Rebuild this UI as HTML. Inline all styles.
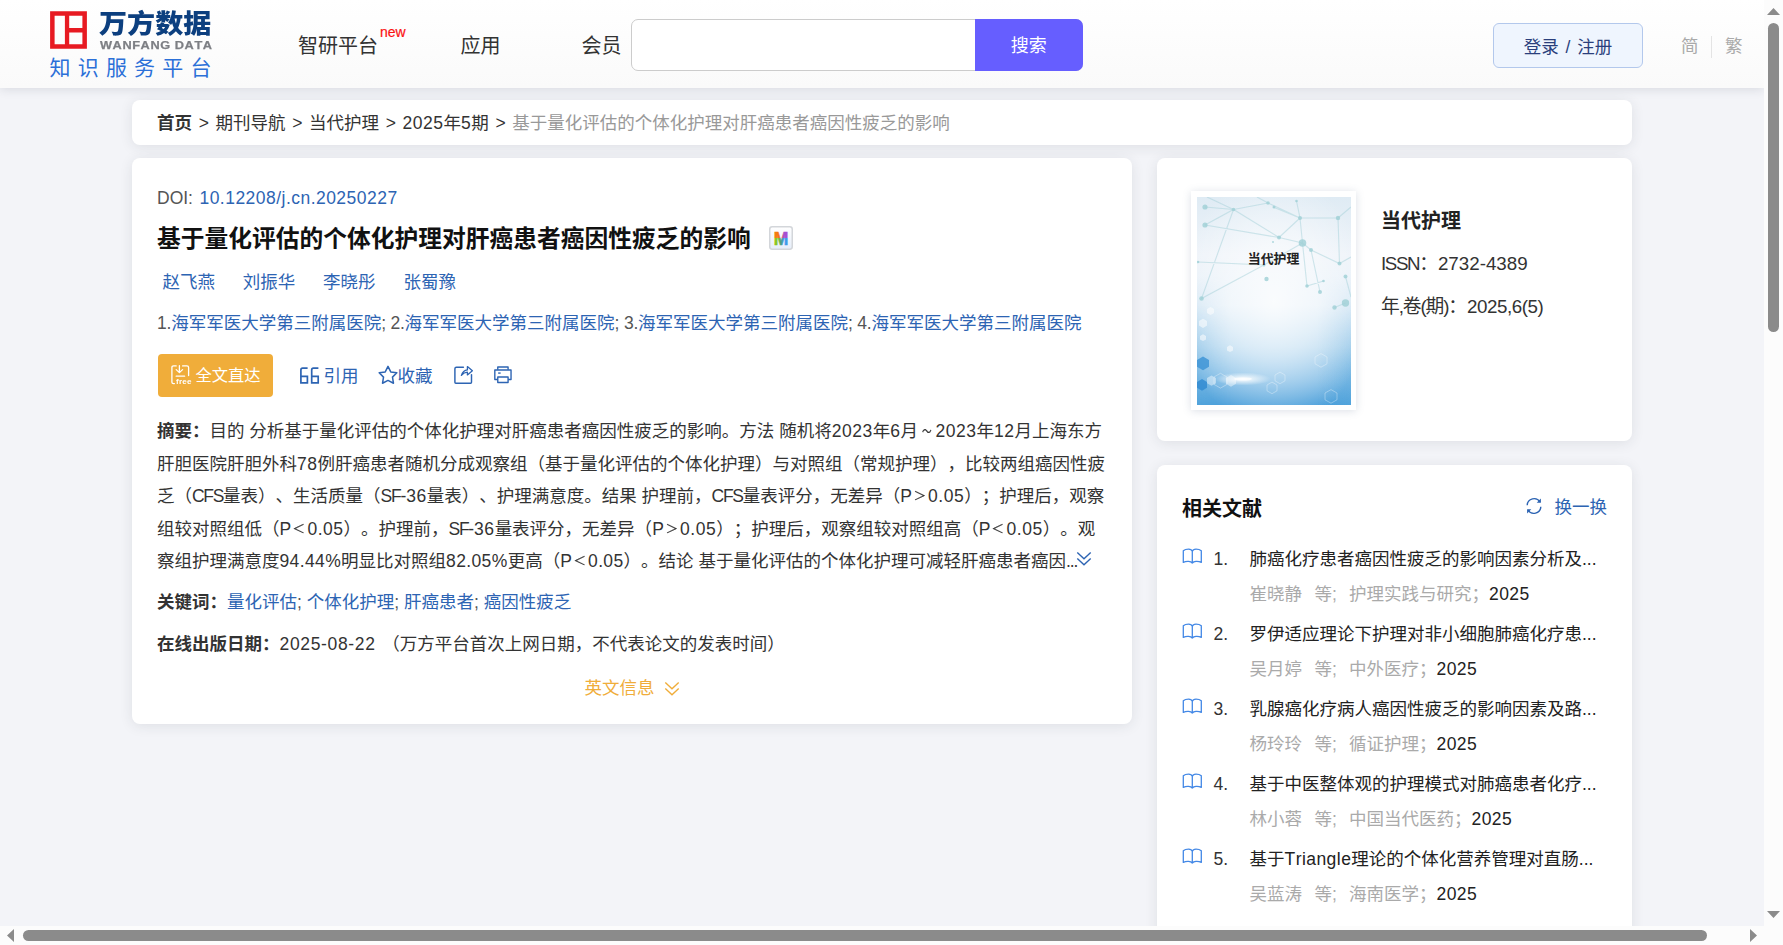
<!DOCTYPE html>
<html lang="zh-CN">
<head>
<meta charset="utf-8">
<title>基于量化评估的个体化护理对肝癌患者癌因性疲乏的影响</title>
<style>
*{box-sizing:border-box;margin:0;padding:0}
html,body{width:1783px;height:945px;overflow:hidden}
body{position:relative;background:#f3f4f8;font-family:"Liberation Sans","Noto Sans CJK SC",sans-serif;font-size:17.5px;color:#333;line-height:1;text-spacing-trim:space-all;font-kerning:none}
a{text-decoration:none;color:inherit}
.abs{position:absolute}
.nw{white-space:nowrap}
.blue{color:#2d64b3}
.gray{color:#555}
svg{display:block}

/* viewport area (without scrollbars) */
#view{position:absolute;left:0;top:0;width:1764px;height:926px;overflow:hidden;background:#f3f4f8}

/* header */
#hdr{position:absolute;left:0;top:0;width:1764px;height:88px;background:linear-gradient(#ffffff,#fafafa);box-shadow:0 1px 10px rgba(40,50,70,.14)}
#logo{position:absolute;left:50px;top:11px;width:162px;height:68px}
.nav{position:absolute;top:26px;height:40px;line-height:40px;font-size:20px;color:#333;white-space:nowrap}
#new{position:absolute;left:380px;top:24px;font-size:14px;line-height:16px;color:#fb1212;-webkit-text-stroke:.2px #fb1212}
#sbox{position:absolute;left:631px;top:19px;width:452px;height:52px;border:1px solid #ccc;border-radius:7px;background:#fff}
#sbtn{position:absolute;left:975px;top:19px;width:107.5px;height:52px;border-radius:0 7px 7px 0;background:#665eff;color:#fff;text-align:center;line-height:54.600px;font-size:18px}
#login{position:absolute;left:1493px;top:23px;width:150px;height:45px;border:1px solid #b3c8ec;border-radius:6px;background:#eff5fe;color:#2b3f7c;text-align:center;line-height:45px;padding-top:1px;word-spacing:2px;font-size:17.5px;white-space:nowrap}
.lang{position:absolute;top:36px;font-size:17.5px;line-height:20px;color:#aaa}
#langsep{position:absolute;left:1711px;top:36px;width:1px;height:22px;background:#e4e4e4}

/* cards */
.card{position:absolute;background:#fff;border-radius:8px;box-shadow:0 2px 13px rgba(40,46,58,.10)}
#crumb{left:132px;top:100px;width:1500px;height:45px;line-height:47.6px;padding-left:25px;white-space:nowrap;color:#333}
#crumb b{font-weight:bold;color:#333}
#crumb i{font-style:normal;display:inline-block;width:23.5px;text-align:center}
#crumb .cur{color:#999}
#main{left:132px;top:158px;width:1000px;height:565.5px}
#jour{left:1157px;top:158px;width:475px;height:283px}
#rel{left:1157px;top:465px;width:475px;height:520px}

.fw{display:inline-block;width:1em;text-align:center;transform:scale(.72,.68);-webkit-text-stroke:.3px #333}
.D{letter-spacing:.52px}.L{letter-spacing:-1.3px}
.ln{position:absolute;left:25px;white-space:nowrap;line-height:32.5px;height:32.5px}

/* scrollbars */
#vsb{position:absolute;left:1764px;top:0;width:19px;height:926px;background:#fcfcfc}
#hsb{position:absolute;left:0;top:926px;width:1783px;height:19px;background:#fcfcfc}
#vsb .th{position:absolute;left:4px;top:23px;width:11px;height:309px;border-radius:5.5px;background:#8b8b8b}
#hsb .th{position:absolute;left:23px;top:4px;width:1684px;height:11px;border-radius:5.5px;background:#8b8b8b}
#vsb svg,#hsb svg{position:absolute;left:0;top:0}

/* logo */
#logo .sq{position:absolute;left:0;top:0}
#logo .cn{position:absolute;left:48.5px;top:-3px;font-size:27px;line-height:34px;font-weight:900;color:#0c3f7f;white-space:nowrap;transform-origin:0 0;transform:scale(1.04,.97)}
#logo .en{position:absolute;left:49.5px;top:27.7px;font-size:11px;line-height:12px;font-weight:bold;color:#7d7f84;white-space:nowrap;letter-spacing:.5px;transform-origin:0 0;transform:scaleX(1.16);-webkit-text-stroke:.25px #7d7f84}
#logo .sub{position:absolute;left:-.5px;top:44px;font-size:21px;line-height:26px;color:#2b70d8;white-space:nowrap;letter-spacing:7.2px}

/* main card */
#doi{top:23.6px}
#doi .v{letter-spacing:.47px;margin-left:1.6px}
#title{position:absolute;left:25px;top:62.5px;font-size:23.75px;line-height:36px;font-weight:bold;color:#111;white-space:nowrap}
#micon{position:absolute;left:637px;top:68px}
#authors{position:absolute;left:30.5px;top:108px;line-height:32.5px;white-space:nowrap}
#authors a{display:inline-block;width:80.3px}
#aff{top:148.8px}
#aff .n{color:#555;letter-spacing:-.22px}
#ftbtn{position:absolute;left:26px;top:196px;width:115px;height:43px;border-radius:4px;background:#f0ad3a;color:#fff}
#ftbtn svg{position:absolute;left:12.5px;top:10.5px}
#ftbtn .fr{position:absolute;left:17.5px;top:24.1px;font-size:7px;line-height:8px;font-weight:bold;letter-spacing:.2px;transform-origin:0 0;transform:scaleX(1.15)}
#ftbtn .tx{position:absolute;left:37.5px;top:0;font-size:16.25px;line-height:43px;white-space:nowrap}
.act{position:absolute;top:202px;height:33px;line-height:33px;white-space:nowrap;color:#2d64b3}
.ic{position:absolute}
#abs{top:256px}
.kw{top:427.9px}
.kw b,.od b,#abs1 b{color:#333}
.od{top:470.1px}
#eng{position:absolute;left:452.5px;top:514px;line-height:32.5px;color:#f0ad3a;white-space:nowrap}

/* journal card */
#cover{position:absolute;left:34px;top:33px;width:165px;height:219px;background:#fff;box-shadow:0 1px 8px rgba(90,110,140,.22)}
#cover svg{position:absolute;left:5.5px;top:5.5px}
#jname{position:absolute;left:224px;top:46.5px;font-size:20px;line-height:32px;font-weight:bold;color:#222;white-space:nowrap}
.jl{position:absolute;left:224px;font-size:18.75px;line-height:30px;color:#333;white-space:nowrap}
/* related */
#relh{position:absolute;left:25px;top:27.6px;font-size:20px;line-height:32px;font-weight:bold;color:#111;white-space:nowrap}
#chg{position:absolute;left:397.5px;top:26px;line-height:32px;color:#2d64b3;white-space:nowrap}
.ri{position:absolute;left:25px;width:430px;height:75px}
.ri svg{position:absolute;left:0;top:0}
.ri .no{position:absolute;left:31.5px;top:0;line-height:32.5px;color:#333}
.ri .t{position:absolute;left:67.5px;top:0;line-height:32.5px;color:#222;white-space:nowrap}
.ri .m{position:absolute;left:67.5px;top:35.3px;line-height:32.5px;color:#aaa;white-space:nowrap}
.ri .m em{font-style:normal;color:#222;letter-spacing:.4px}
.ri .m .a{display:inline-block;width:65px}
.ri .m .d{display:inline-block;width:34.5px}
</style>
</head>
<body>
<div id="view">

<!-- HEADER -->
<div id="hdr">
  <div id="logo"><svg class="sq" width="38" height="39" viewBox="0 0 38 39"><path d="M0.1 0.2H36.9V37.8H0.1Z M4.6 4.7V33.3H14.9V4.7Z M19.2 4.7V17H32.4V4.7Z M19.2 21.5V33.3H32.4V21.5Z" fill="#e71a22" fill-rule="evenodd"/></svg><div class="cn">万方数据</div><div class="en">WANFANG DATA</div><div class="sub">知识服务平台</div></div>
  <a class="nav" style="left:298px">智研平台</a>
  <span id="new">new</span>
  <a class="nav" style="left:460.5px">应用</a>
  <a class="nav" style="left:581.5px">会员</a>
  <div id="sbox"></div>
  <div id="sbtn">搜索</div>
  <div id="login">登录 / 注册</div>
  <span class="lang" style="left:1681px">简</span>
  <div id="langsep"></div>
  <span class="lang" style="left:1725px">繁</span>
</div>

<!-- BREADCRUMB -->
<div id="crumb" class="card"><b>首页</b><i>&gt;</i>期刊导航<i>&gt;</i>当代护理<i>&gt;</i><span class="D">2025</span>年<span class="D">5</span>期<i>&gt;</i><span class="cur">基于量化评估的个体化护理对肝癌患者癌因性疲乏的影响</span></div>

<!-- MAIN CARD -->
<div id="main" class="card">
  <div id="doi" class="ln"><span class="gray">DOI: </span><a class="blue v">10.12208/j.cn.20250227</a></div>
  <div id="title">基于量化评估的个体化护理对肝癌患者癌因性疲乏的影响</div>
  <svg id="micon" width="24" height="24" viewBox="0 0 24 24"><defs><linearGradient id="mbg" x1="0" y1="0" x2="0" y2="1"><stop offset="0" stop-color="#fff"/><stop offset="1" stop-color="#e6eefa"/></linearGradient><linearGradient id="mg1" x1="0" y1="0" x2="1" y2="0"><stop offset="0" stop-color="#f5790f"/><stop offset=".3" stop-color="#f5790f"/><stop offset=".5" stop-color="#e0584a"/><stop offset=".7" stop-color="#a64fd1"/><stop offset="1" stop-color="#a64fd1"/></linearGradient><linearGradient id="mg2" x1="0" y1="0" x2="1" y2="0"><stop offset="0" stop-color="#86c620"/><stop offset=".3" stop-color="#86c620"/><stop offset=".5" stop-color="#4a9a8a"/><stop offset=".7" stop-color="#3d9be9"/><stop offset="1" stop-color="#3d9be9"/></linearGradient><clipPath id="mc1"><rect x="0" y="0" width="24" height="12"/></clipPath><clipPath id="mc2"><rect x="0" y="12" width="24" height="12"/></clipPath></defs><rect x=".75" y=".75" width="22.5" height="22.5" rx="2.4" fill="url(#mbg)" stroke="#d3d6da" stroke-width="1.5"/><text x="12" y="18.6" text-anchor="middle" font-family="Liberation Sans,sans-serif" font-weight="bold" font-size="17.5" fill="url(#mg1)" stroke="url(#mg1)" stroke-width=".6" clip-path="url(#mc1)">M</text><text x="12" y="18.6" text-anchor="middle" font-family="Liberation Sans,sans-serif" font-weight="bold" font-size="17.5" fill="url(#mg2)" stroke="url(#mg2)" stroke-width=".6" clip-path="url(#mc2)">M</text></svg>
  <div id="authors" class="blue"><a>赵飞燕</a><a>刘振华</a><a>李晓彤</a><a>张蜀豫</a></div>
  <div id="aff" class="ln"><span class="n">1.</span><a class="blue">海军军医大学第三附属医院</a><span class="n">; 2.</span><a class="blue">海军军医大学第三附属医院</a><span class="n">; 3.</span><a class="blue">海军军医大学第三附属医院</a><span class="n">; 4.</span><a class="blue">海军军医大学第三附属医院</a></div>

  <a id="ftbtn"><svg width="21" height="21" viewBox="0 0 21 21" fill="none" stroke="#fff" stroke-width="1.3" stroke-linecap="round" stroke-linejoin="round"><path d="M5.2 .9H2.6Q.9 .9 .9 2.6V17.2Q.9 18.6 2.6 18.6H3.4"/><path d="M11.6 .9H15.9Q17.6 .9 17.6 2.6V10.6"/><path d="M8.4 .7V7.2M5.2 4.6L8.4 7.6L11.6 4.6"/><path d="M5.2 11.2H13.6"/></svg><span class="fr">free</span><span class="tx">全文直达</span></a>

  <svg class="ic" style="left:167px;top:208.5px" width="22" height="18" viewBox="0 0 22 18" fill="none" stroke="#2d64b3" stroke-width="1.7" stroke-linejoin="miter"><path d="M8.6 1.2H3.6Q1.9 1.2 1.9 2.9V15.9H8.4V9.3H1.9"/><path d="M19.4 1.2H14.4Q12.7 1.2 12.7 2.9V15.9H19.2V9.3H12.7"/></svg>
  <a class="act" style="left:191.5px">引用</a>
  <svg class="ic" style="left:246px;top:207px" width="20" height="20" viewBox="0 0 20 20" fill="none" stroke="#2d64b3" stroke-width="1.5" stroke-linejoin="round"><path d="M10.00 1.40L12.76 6.90L18.84 7.83L14.47 12.15L15.47 18.22L10.00 15.40L4.53 18.22L5.53 12.15L1.16 7.83L7.24 6.90Z"/></svg>
  <a class="act" style="left:265.5px">收藏</a>
  <svg class="ic" style="left:321px;top:206px" width="22" height="22" viewBox="0 0 22 22" fill="none" stroke="#2d64b3" stroke-width="1.45" stroke-linecap="round" stroke-linejoin="round"><path d="M10.4 3.2H3.4Q1.9 3.2 1.9 4.7V18.3Q1.9 19.2 2.8 19.2H17.6Q18.5 19.2 18.5 18.300V10.600"/><path d="M8.4 11.4Q10 6.4 14.4 5.9V2.6L19.4 6.7L14.4 10.9V8.2Q11 8.4 8.4 11.4Z" stroke-width="1.3"/></svg>
  <svg class="ic" style="left:361px;top:206.3px" width="21" height="21" viewBox="0 0 22 22" fill="none" stroke="#2d64b3" stroke-width="1.45" stroke-linejoin="round"><path d="M5 6V3.1H15.8V6"/><path d="M5 16.2H1.9V6.3H18.9V16.2H15.8"/><path d="M5 13.6H15.8V19.4H5Z"/><path d="M5.4 9.5H8" stroke-linecap="butt"/></svg>

  <div id="abs">
  <div class="ln" id="abs1" style="top:257.3px"><b>摘要：</b>目的 分析基于量化评估的个体化护理对肝癌患者癌因性疲乏的影响。方法 随机将<span class="D">2023</span>年<span class="D">6</span>月<span class="fw" style="transform:scale(.55,.8)">～</span><span class="D">2023</span>年<span class="D">12</span>月上海东方</div>
  <div class="ln" style="top:289.8px">肝胆医院肝胆外科<span class="D">78</span>例肝癌患者随机分成观察组（基于量化评估的个体化护理）与对照组（常规护理），比较两组癌因性疲</div>
  <div class="ln" style="top:322.3px">乏（<span class="L">CFS</span>量表）、生活质量（<span class="L">SF</span>-<span class="D">36</span>量表）、护理满意度。结果 护理前，<span class="L">CFS</span>量表评分，无差异（<span class="L">P</span><span class="fw">＞</span><span class="D">0.05</span>）；护理后，观察</div>
  <div class="ln" style="top:354.8px">组较对照组低（<span class="L">P</span><span class="fw">＜</span><span class="D">0.05</span>）。护理前，<span class="L">SF</span>-<span class="D">36</span>量表评分，无差异（<span class="L">P</span><span class="fw">＞</span><span class="D">0.05</span>）；护理后，观察组较对照组高（<span class="L">P</span><span class="fw">＜</span><span class="D">0.05</span>）。观</div>
  <div class="ln" style="top:387.3px">察组护理满意度<span class="D" style="letter-spacing:.37px">94.44%</span>明显比对照组<span class="D" style="letter-spacing:.37px">82.05%</span>更高（<span class="L">P</span><span class="fw">＜</span><span class="D" style="letter-spacing:.37px">0.05</span>）。结论 基于量化评估的个体化护理可减轻肝癌患者癌因<span style="letter-spacing:-1.1px">...</span></div>
  <svg class="ic" style="left:944px;top:393px" width="16" height="16" viewBox="0 0 16 16" fill="none" stroke="#2d64b3" stroke-width="1.4"><path d="M1.3 1.5L8 7.8L14.7 1.5M1.3 7.5L8 13.8L14.7 7.5"/></svg>
  </div>

  <div class="ln kw"><b>关键词：</b><a class="blue">量化评估</a><span class="gray">; </span><a class="blue">个体化护理</a><span class="gray">; </span><a class="blue">肝癌患者</a><span class="gray">; </span><a class="blue">癌因性疲乏</a></div>
  <div class="ln od"><b>在线出版日期：</b><span style="letter-spacing:.65px;margin-right:1.8px">2025-08-22</span> （万方平台首次上网日期，不代表论文的发表时间）</div>
  <div id="eng">英文信息<svg class="ic" style="left:79.2px;top:8.8px" width="16" height="16" viewBox="0 0 16 16" fill="none" stroke="#f0ad3a" stroke-width="1.4"><path d="M1.3 1.5L8 7.8L14.7 1.5M1.3 7.5L8 13.8L14.7 7.5"/></svg></div>
</div>

<!-- JOURNAL CARD -->
<div id="jour" class="card">
  <div id="cover">
  <svg width="154" height="208" viewBox="0 0 154 208">
    <defs>
      <linearGradient id="cg" x1="0" y1="0" x2="0" y2="1"><stop offset="0" stop-color="#dfebf4"/><stop offset=".28" stop-color="#eef3f9"/><stop offset=".52" stop-color="#e4eff8"/><stop offset=".72" stop-color="#b4d7ef"/><stop offset=".88" stop-color="#7dbae5"/><stop offset="1" stop-color="#4b9fda"/></linearGradient>
      <radialGradient id="cr" cx=".5" cy=".5" r=".62"><stop offset="0" stop-color="#fff" stop-opacity=".8"/><stop offset=".45" stop-color="#fff" stop-opacity=".5"/><stop offset="1" stop-color="#fff" stop-opacity="0"/></radialGradient>
      <radialGradient id="glow" cx=".5" cy=".5" r=".5"><stop offset="0" stop-color="#fff" stop-opacity="1"/><stop offset="1" stop-color="#fff" stop-opacity="0"/></radialGradient>
      <linearGradient id="side" x1="0" y1="0" x2="1" y2="0"><stop offset="0" stop-color="#5aa9dd" stop-opacity=".45"/><stop offset=".22" stop-color="#5aa9dd" stop-opacity="0"/><stop offset=".78" stop-color="#5aa9dd" stop-opacity="0"/><stop offset="1" stop-color="#5aa9dd" stop-opacity=".45"/></linearGradient>
      <linearGradient id="sidem" x1="0" y1="0" x2="0" y2="1"><stop offset="0" stop-color="#fff" stop-opacity="0"/><stop offset=".38" stop-color="#fff" stop-opacity="0"/><stop offset="1" stop-color="#fff" stop-opacity="1"/></linearGradient>
      <mask id="sm"><rect width="154" height="208" fill="url(#sidem)"/></mask>
    </defs>
    <rect width="154" height="208" fill="url(#cg)"/>
    <rect width="154" height="208" fill="url(#side)" mask="url(#sm)"/>
    <rect width="154" height="208" fill="url(#cr)"/>
    <g stroke="#a6d2d9" stroke-width="1.1" fill="none" opacity=".5">
      <path d="M8 10L36.5 12.5L71 6L103 21L141 21M8 28L36.5 12.5L82 40.5L103 21L99.5 4M8 28L82 40.5L105.5 46L114 53L142.5 66.5L141 21M76 10L103 21L105.5 46L110 89L126.5 84M1 65L67 68L4.5 101.5L36.5 12.5M114 53L123 95M36.5 12.5L10 0M71 6L60 0M141 21L154 10M142.5 66.5L154 60M67 68L105.5 46M148.5 79.5L154 100M148.5 106L137.5 110.5"/>
    </g>
    <g fill="#9fd0d6" opacity=".8">
      <circle cx="8" cy="10" r="2.6"/><circle cx="8" cy="28" r="2.6"/><circle cx="36.5" cy="12.5" r="1.8"/><circle cx="71" cy="6" r="1.8"/><circle cx="77" cy="10" r="1.5"/><circle cx="99.5" cy="4" r="1.3"/><circle cx="103" cy="21" r="2"/><circle cx="82" cy="40.5" r="2"/><circle cx="76" cy="45" r="1"/><circle cx="105.5" cy="46" r="3.8"/><circle cx="114" cy="53" r="2"/><circle cx="141" cy="21" r="2.2"/><circle cx="142.5" cy="66.5" r="2"/><circle cx="148.5" cy="79.5" r="2"/><circle cx="69.5" cy="82" r="2.2"/><circle cx="110" cy="89" r="1.8"/><circle cx="123" cy="95" r="2"/><circle cx="126.5" cy="84" r="1.3"/><circle cx="4.5" cy="101.5" r="2.3"/><circle cx="148.5" cy="106" r="3.7"/><circle cx="137.5" cy="110.5" r="2.2"/><circle cx="1" cy="65" r="1.3"/><circle cx="67" cy="68" r="1.5"/>
    </g>
    <g fill="#fff" opacity=".55">
      <path d="M2 124l4-2.3l4 2.3v4.6l-4 2.3l-4-2.3z M10 112l3.5-2l3.500 2v4l-3.500 2l-3.500-2z M3 139l3-1.700l3 1.700v3.400l-3 1.700l-3-1.700z M30 150l3-1.700l3 1.700v3.400l-3 1.700l-3-1.700z"/>
      <path d="M10 181l4.500-2.600l4.500 2.600v5.200l-4.500 2.600l-4.500-2.600z M29 181l5-2.900l5 2.900v5.800l-5 2.900l-5-2.900z" opacity=".8"/>
    </g>
    <g fill="#3b93d6" opacity=".8">
      <path d="M0 163l6-3.400l6 3.400v6.800l-6 3.400l-6-3.400z"/><path d="M0 185l5-2.900l5 2.900v5.800l-5 2.900l-5-2.900z" fill="#2f8ad2"/>
    </g>
    <g fill="none" stroke="#fff" stroke-width=".6" opacity=".55">
      <path d="M17 180l6.500-3.700l6.500 3.700v7.400l-6.500 3.700l-6.500-3.700z M78 178l5-2.900l5 2.900v5.800l-5 2.900l-5-2.900z M70 188l5-2.900l5 2.900v5.800l-5 2.900l-5-2.900z M118 160l6-3.400l6 3.400v6.800l-6 3.400l-6-3.400z M128 196l6-3.400l6 3.400v6.800l-6 3.400l-6-3.400z"/>
    </g>
    <ellipse cx="46" cy="182" rx="28" ry="6.5" fill="url(#glow)"/>
    <ellipse cx="46" cy="182" rx="9" ry="1.6" fill="#fff" opacity=".7"/>
    <text x="76.6" y="65.6" text-anchor="middle" font-family="Liberation Sans,Noto Sans CJK SC,sans-serif" font-weight="bold" font-size="12.9" fill="#222">当代护理</text>
  </svg>
  </div>
  <div id="jname">当代护理</div>
  <div class="jl" style="top:90.7px"><span style="letter-spacing:-1.4px">ISSN</span>：<span>2732-4389</span></div>
  <div class="jl" style="top:133.7px"><span style="letter-spacing:-1.1px">年,卷(期)</span>：<span style="letter-spacing:-.45px">2025,6(5)</span></div>
</div>

<!-- RELATED -->
<div id="rel" class="card">
  <div id="relh">相关文献</div>
  <a id="chg"><svg class="ic" style="left:-29.5px;top:5.7px" width="18" height="18" viewBox="0 0 18 18" fill="none" stroke="#2d64b3" stroke-width="1.4"><path d="M2.2 8.2A6.9 6.9 0 0 1 15 5"/><path d="M15.800 9.800A6.900 6.900 0 0 1 3 13"/><path d="M15.9 1.6V5.800H11.700Z M2.100 16.400V12.200H6.300Z" fill="#2d64b3" stroke="none"/></svg>换一换</a>
  <div class="ri" style="top:77.8px"><div style="position:absolute;left:0;top:5px"><svg width="21" height="16.600" viewBox="0 0 21 18" preserveAspectRatio="none" fill="none" stroke="#4388e6" stroke-width="1.3" stroke-linejoin="round"><path d="M10.3 3.6Q9.6 1.2 6.6 1.2Q3.2 1.2 1.3 3V15.6Q3.6 14.4 6.6 14.6Q9.2 14.8 10.3 16.4Q11.400 14.8 14 14.6Q17 14.4 19.300 15.600V3Q17.400 1.200 14 1.200Q11 1.200 10.300 3.600ZM10.300 3.600V16.200"/></svg></div><span class="no">1.</span><a class="t">肺癌化疗患者癌因性疲乏的影响因素分析及...</a><div class="m"><span class="a">崔晓静</span><span class="d">等;</span>护理实践与研究；<em>2025</em></div></div>
  <div class="ri" style="top:152.8px"><div style="position:absolute;left:0;top:5px"><svg width="21" height="16.600" viewBox="0 0 21 18" preserveAspectRatio="none" fill="none" stroke="#4388e6" stroke-width="1.3" stroke-linejoin="round"><path d="M10.3 3.6Q9.6 1.2 6.6 1.2Q3.2 1.2 1.3 3V15.6Q3.6 14.4 6.6 14.6Q9.2 14.8 10.3 16.4Q11.400 14.8 14 14.6Q17 14.4 19.300 15.600V3Q17.400 1.200 14 1.200Q11 1.200 10.300 3.600ZM10.300 3.600V16.200"/></svg></div><span class="no">2.</span><a class="t">罗伊适应理论下护理对非小细胞肺癌化疗患...</a><div class="m"><span class="a">吴月婷</span><span class="d">等;</span>中外医疗；<em>2025</em></div></div>
  <div class="ri" style="top:227.8px"><div style="position:absolute;left:0;top:5px"><svg width="21" height="16.600" viewBox="0 0 21 18" preserveAspectRatio="none" fill="none" stroke="#4388e6" stroke-width="1.3" stroke-linejoin="round"><path d="M10.3 3.6Q9.6 1.2 6.6 1.2Q3.2 1.2 1.3 3V15.6Q3.6 14.4 6.6 14.6Q9.2 14.8 10.3 16.4Q11.400 14.8 14 14.6Q17 14.4 19.300 15.600V3Q17.400 1.200 14 1.200Q11 1.200 10.300 3.600ZM10.300 3.600V16.200"/></svg></div><span class="no">3.</span><a class="t">乳腺癌化疗病人癌因性疲乏的影响因素及路...</a><div class="m"><span class="a">杨玲玲</span><span class="d">等;</span>循证护理；<em>2025</em></div></div>
  <div class="ri" style="top:302.8px"><div style="position:absolute;left:0;top:5px"><svg width="21" height="16.600" viewBox="0 0 21 18" preserveAspectRatio="none" fill="none" stroke="#4388e6" stroke-width="1.3" stroke-linejoin="round"><path d="M10.3 3.6Q9.6 1.2 6.6 1.2Q3.2 1.2 1.3 3V15.6Q3.6 14.4 6.6 14.6Q9.2 14.8 10.3 16.4Q11.400 14.8 14 14.6Q17 14.4 19.300 15.600V3Q17.400 1.200 14 1.200Q11 1.200 10.300 3.600ZM10.300 3.600V16.200"/></svg></div><span class="no">4.</span><a class="t">基于中医整体观的护理模式对肺癌患者化疗...</a><div class="m"><span class="a">林小蓉</span><span class="d">等;</span>中国当代医药；<em>2025</em></div></div>
  <div class="ri" style="top:377.8px"><div style="position:absolute;left:0;top:5px"><svg width="21" height="16.600" viewBox="0 0 21 18" preserveAspectRatio="none" fill="none" stroke="#4388e6" stroke-width="1.3" stroke-linejoin="round"><path d="M10.3 3.6Q9.6 1.2 6.6 1.2Q3.2 1.2 1.3 3V15.6Q3.6 14.4 6.6 14.6Q9.2 14.8 10.3 16.4Q11.400 14.8 14 14.6Q17 14.4 19.300 15.600V3Q17.400 1.200 14 1.200Q11 1.200 10.300 3.600ZM10.300 3.600V16.200"/></svg></div><span class="no">5.</span><a class="t">基于<span style="letter-spacing:.45px">Triangle</span>理论的个体化营养管理对直肠...</a><div class="m"><span class="a">吴蓝涛</span><span class="d">等;</span>海南医学；<em>2025</em></div></div>
</div>

</div>

<!-- SCROLLBARS -->
<div id="vsb"><div class="th"></div><svg width="19" height="926"><path d="M3 15 L16 15 L9.5 8 Z M3 911 L16 911 L9.5 918 Z" fill="#8b8b8b"/></svg></div>
<div id="hsb"><div class="th"></div><svg width="1783" height="19"><path d="M14 3 L14 16 L7 9.5 Z M1750 3 L1750 16 L1757 9.5 Z" fill="#8b8b8b"/></svg></div>
</body>
</html>
